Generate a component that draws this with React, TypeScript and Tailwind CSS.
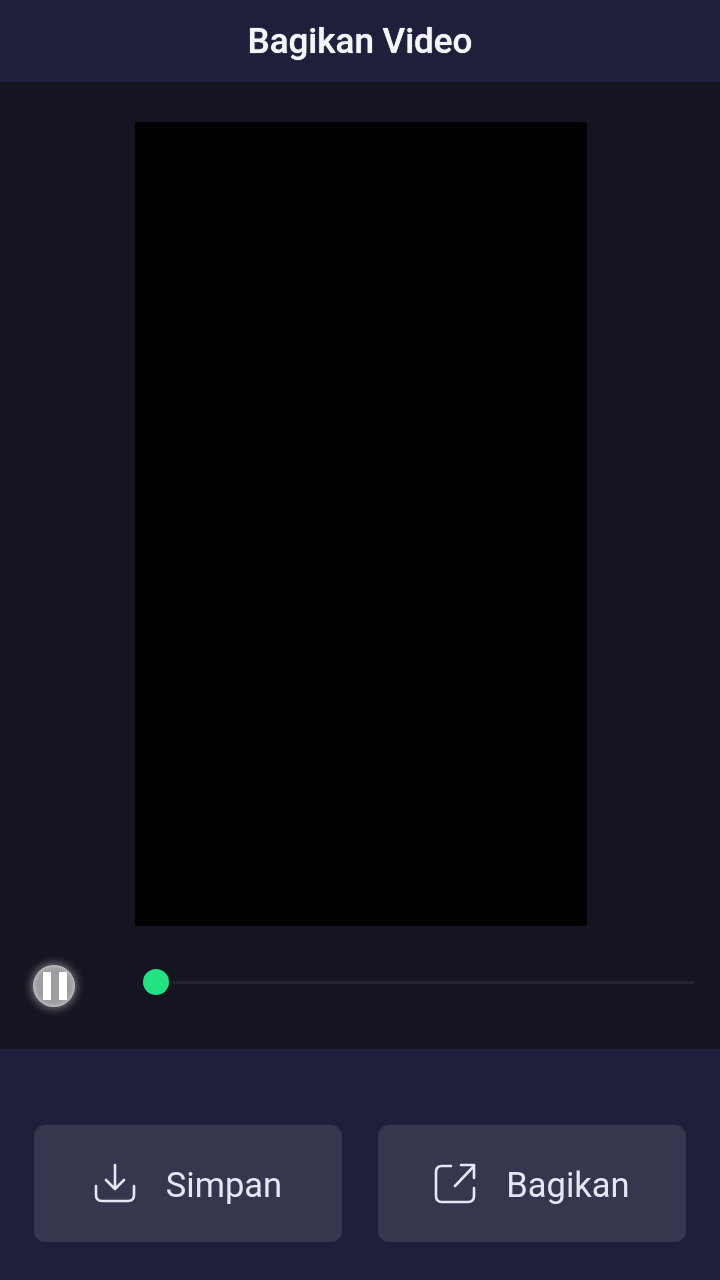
export default function App() {
  return (
    <div className="flex h-[1280px] w-[720px] flex-col overflow-hidden bg-[#141520] font-['Roboto',sans-serif]">
      <header className="flex h-[82px] shrink-0 items-center justify-center bg-[#1e1f3a]">
        <h1 className="text-[35px] font-medium leading-none text-[#f6f6fc] [text-shadow:0_0_1px_#f6f6fc] blur-[0.4px]">Bagikan Video</h1>
      </header>

      <main className="flex h-[967px] shrink-0 flex-col bg-[#141520]">
        <div className="ml-[135px] mt-[40px] h-[804px] w-[452px] rounded-[3px] bg-black" />
        <div className="mt-[39px] flex items-start">
          <button className="ml-[33px] flex h-[42px] w-[42px] items-center justify-center gap-[8px] rounded-full bg-[#9d9da1] pl-[2px] shadow-[0_0_8px_2px_rgba(255,255,255,0.4),inset_0_0_4px_1px_rgba(255,255,255,0.45)] blur-[0.6px]">
            <span className="h-[28px] w-[8px] bg-white" />
            <span className="h-[28px] w-[8px] bg-white" />
          </button>
          <div className="ml-[68px] mt-[4px] flex h-[26px] w-[551px] items-center">
            <span className="h-[26px] w-[26px] shrink-0 rounded-full bg-[#22e283]" />
            <span className="ml-[2px] h-[3px] flex-1 rounded-full bg-[#23242e]" />
          </div>
        </div>
      </main>

      <footer className="flex flex-1 gap-[36px] bg-[#1e1f3a] px-[34px] pt-[76px]">
        <button className="flex h-[117px] w-[308px] items-center justify-center gap-[30px] rounded-[11px] bg-[#36364f] text-[#e6e6f5]">
          <svg width="42" height="42" viewBox="0 0 42 42" fill="none" stroke="currentColor" strokeWidth="2.6" strokeLinecap="round" strokeLinejoin="round">
            <path d="M21 2V25" />
            <path d="M12 17L21 26L30 17" />
            <path d="M2 23V32C2 36 4 38 8 38H34C38 38 40 36 40 32V23" />
          </svg>
          <span className="pt-[3px] text-[34.5px] leading-none blur-[0.3px]">Simpan</span>
        </button>
        <button className="flex h-[117px] w-[308px] items-center justify-center gap-[30px] rounded-[11px] bg-[#36364f] text-[#e6e6f5]">
          <svg width="42" height="42" viewBox="0 0 42 42" fill="none" stroke="currentColor" strokeWidth="2.6" strokeLinecap="round" strokeLinejoin="round">
            <path d="M17 3H8C4 3 2 5 2 9V33C2 37 4 39 8 39H34C38 39 40 37 40 33V25" />
            <path d="M21 23L40 3" />
            <path d="M27 2H40V15" />
          </svg>
          <span className="pt-[3px] text-[34.5px] leading-none blur-[0.3px]">Bagikan</span>
        </button>
      </footer>
    </div>
  );
}
